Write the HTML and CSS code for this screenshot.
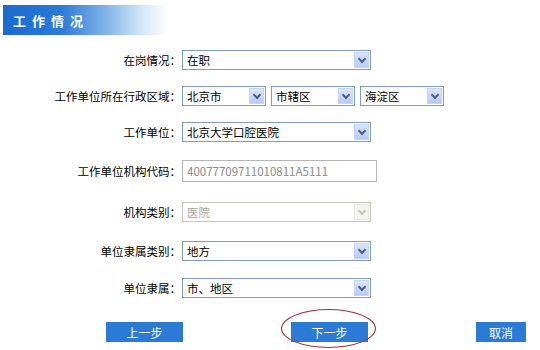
FILE: index.html
```html
<!DOCTYPE html>
<html lang="zh-CN">
<head>
    <meta charset="UTF-8">
    <title>工作情况</title>
    <link rel="stylesheet" href="styles.css">
</head>
<body>

<div class="title-bar">工作情况</div>

<div class="form">
    <div class="row r1">
        <div class="label">在岗情况：</div>
        <div class="select w-full"><span>在职</span><i class="arrow"></i></div>
    </div>
    <div class="row r2">
        <div class="label">工作单位所在行政区域：</div>
        <div class="select w-small"><span>北京市</span><i class="arrow"></i></div>
        <div class="select w-small"><span>市辖区</span><i class="arrow"></i></div>
        <div class="select w-small"><span>海淀区</span><i class="arrow"></i></div>
    </div>
    <div class="row r3">
        <div class="label">工作单位：</div>
        <div class="select w-full"><span>北京大学口腔医院</span><i class="arrow"></i></div>
    </div>
    <div class="row r4">
        <div class="label">工作单位机构代码：</div>
        <div class="input">40077709711010811A5111</div>
    </div>
    <div class="row r5">
        <div class="label">机构类别：</div>
        <div class="select w-full disabled"><span>医院</span><i class="arrow"></i></div>
    </div>
    <div class="row r6">
        <div class="label">单位隶属类别：</div>
        <div class="select w-full"><span>地方</span><i class="arrow"></i></div>
    </div>
    <div class="row r7">
        <div class="label">单位隶属：</div>
        <div class="select w-full"><span>市、地区</span><i class="arrow"></i></div>
    </div>
</div>

<div class="buttons">
    <button class="btn prev">上一步</button>
    <button class="btn next">下一步</button>
    <button class="btn cancel">取消</button>
</div>

</body>
</html>
```

FILE: styles.css
```css
body {
    margin: 0;
    padding: 0;
    width: 540px;
    height: 350px;
    background-color: #ffffff;
    color: #000;
    font-family: "Noto Sans CJK SC", "DejaVu Sans", sans-serif;
    font-size: 11.5px;
    overflow: hidden;
}
.title-bar {
    margin: 5px 0 0 3px;
    width: 165px;
    height: 30px;
    line-height: 31px;
    padding-left: 10px;
    box-sizing: border-box;
    color: #fff;
    font-size: 13px;
    font-weight: bold;
    letter-spacing: 6px;
    background: linear-gradient(to right, #1a6bcf 0%, #2a7ad6 35%, #7fb3e8 62%, #d6e8f8 85%, #ffffff 100%);
}
.form {
    margin-top: 7px;
}
.row {
    display: flex;
    align-items: center;
    height: 36px;
}
.row.r4 { height: 42px; }
.row.r5 { height: 40px; }
.row.r6 { height: 38px; }
.row.r7 { height: 36px; }
.label {
    width: 181px;
    text-align: right;
    flex-shrink: 0;
}
.select {
    display: flex;
    align-items: center;
    justify-content: space-between;
    height: 20px;
    box-sizing: border-box;
    border: 1px solid #7f9db9;
    background-color: #fff;
    margin-left: 1px;
    padding: 0 1px 0 4px;
}
.select + .select {
    margin-left: 5px;
}
.w-full { width: 189px; }
.w-small { width: 84px; }
.arrow {
    width: 15px;
    height: 16px;
    box-sizing: border-box;
    border: 1px solid #c3d3fd;
    background: linear-gradient(#dbe6fd, #b7cbf8);
    position: relative;
}
.arrow::after {
    content: "";
    position: absolute;
    left: 4px;
    top: 3px;
    width: 4px;
    height: 4px;
    border-right: 2px solid #4d6185;
    border-bottom: 2px solid #4d6185;
    transform: rotate(45deg);
}
.select.disabled {
    border-color: #c9c7ba;
    color: #aca899;
}
.select.disabled .arrow {
    border-color: #e8e8e4;
    background: #f4f4f0;
}
.select.disabled .arrow::after {
    border-color: #c9c7ba;
}
.input {
    margin-left: 1px;
    width: 195px;
    height: 22px;
    line-height: 20px;
    box-sizing: border-box;
    border: 1px solid #b5b5b5;
    padding-left: 4px;
    color: #8a8a8a;
}
.buttons {
    display: flex;
    margin-top: 16px;
    padding-left: 106px;
}
.btn {
    height: 20px;
    padding: 0;
    border: none;
    background-color: #2b7bd6;
    color: #fff;
    font-family: inherit;
    font-size: 12px;
}
.prev { width: 77px; }
.next {
    width: 77px;
    margin-left: 108px;
    position: relative;
}
.next::before {
    content: "";
    position: absolute;
    left: -10px;
    top: -13px;
    width: 93px;
    height: 37px;
    border: 1.5px solid #a8323a;
    border-radius: 50%;
}
.cancel {
    width: 50px;
    margin-left: 108px;
}
```
